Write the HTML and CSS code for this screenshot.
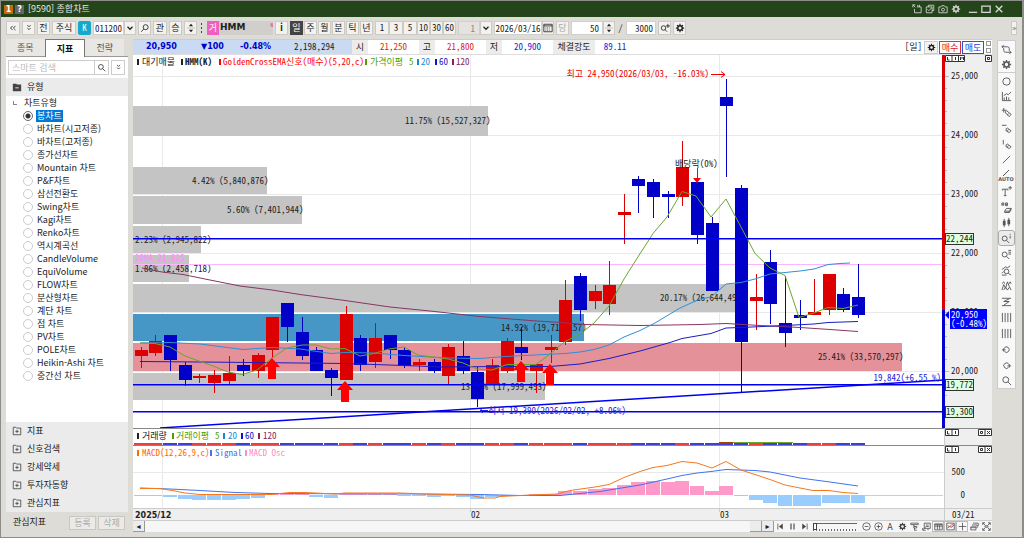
FILE: index.html
```html
<!DOCTYPE html>
<html lang="ko">
<head>
<meta charset="utf-8">
<title>[9590] 종합차트</title>
<link rel="stylesheet" href="styles.css">
</head>
<body>
<svg class="defs" aria-hidden="true">
  <symbol id="gear" viewBox="0 0 12 12"><circle cx="6" cy="6" r="2.7" fill="none" stroke="currentColor" stroke-width="1.8"/><path d="M6 1v2M6 9v2M1 6h2M9 6h2M2.5 2.5l1.3 1.3M8.2 8.2l1.3 1.3M9.5 2.5L8.2 3.8M3.8 8.2L2.5 9.5" stroke="currentColor" stroke-width="1.5"/></symbol>
  <symbol id="mag" viewBox="0 0 12 12"><g fill="none" stroke="currentColor"><circle cx="5.2" cy="5.2" r="3.2"/><path d="M7.6 7.6L11 11"/></g></symbol>
  <symbol id="magr" viewBox="0 0 12 12"><g fill="none" stroke="currentColor"><circle cx="6.8" cy="5" r="3"/><path d="M4.5 7.2L1.5 10.5"/></g></symbol>
  <symbol id="magplus" viewBox="0 0 12 12"><g fill="none" stroke="currentColor"><circle cx="4.2" cy="6" r="2.7"/><path d="M6 8l2.5 2.5M9.500 1v5M7 3.500h5"/></g></symbol>
  <symbol id="down" viewBox="0 0 12 12"><path d="M3 4.500l3 3 3-3" fill="none" stroke="currentColor" stroke-width="1.500"/></symbol>
  <symbol id="dbl" viewBox="0 0 12 12"><path d="M4 2.500l2 2 2-2M4 6l2 2 2-2" fill="none" stroke="currentColor"/></symbol>
  <symbol id="lefts" viewBox="0 0 12 12"><path d="M5.500 3.500L3 6l2.500 2.500M9 3.500L6.500 6 9 8.500" fill="none" stroke="currentColor"/></symbol>
  <symbol id="rights" viewBox="0 0 12 12"><path d="M2 3l3 3-3 3M6 3l3 3-3 3" fill="none" stroke="currentColor" stroke-width="1.500"/></symbol>
  <symbol id="spin" viewBox="0 0 12 12"><path d="M6 1l2.500 3h-5zM6 11l2.500-3h-5z" fill="currentColor"/><path d="M1 6h10" stroke="#bbb"/></symbol>
  <symbol id="cal" viewBox="0 0 12 12"><g fill="none" stroke="currentColor"><path d="M1 1.500h10v9H1zM1 3.500h10"/><path d="M3 6h6M3 8.500h6" stroke-dasharray="1 1"/></g></symbol>
  <symbol id="folderplus" viewBox="0 0 12 12"><g fill="none" stroke="currentColor"><path d="M1.500 1.500h3l1 1h5v8h-9zM6 4.500v4M4 6.500h4"/></g></symbol>
  <symbol id="folder" viewBox="0 0 12 12"><path d="M1 2h4l1 1h5v8H1z" fill="currentColor"/><path d="M4 7h4" stroke="#fff"/></symbol>
  <symbol id="w1" viewBox="0 0 12 12"><path d="M1 4V1h3M1 1l3 3M3 6v4.500h8v-7H6M7 3.500V1M9 3.500V1" fill="none" stroke="currentColor"/></symbol>
  <symbol id="w2" viewBox="0 0 12 12"><path d="M1.500 3.500h7v7h-7zM4 3.500v-2h6.500V8H8.500M3 6.500L4.500 8 8 4.500" fill="none" stroke="currentColor"/></symbol>
  <symbol id="cam" viewBox="0 0 12 12"><g fill="none" stroke="currentColor"><path d="M1 3.500h2.500l1-1.500h3l1 1.500H11v7H1z"/><circle cx="6" cy="6.800" r="1.800"/></g></symbol>
  <symbol id="min" viewBox="0 0 12 12"><path d="M1 10h10" stroke="currentColor" stroke-width="1.500"/></symbol>
  <symbol id="max" viewBox="0 0 12 12"><path d="M1 2.500h10v7.500H1z" fill="none" stroke="currentColor" stroke-width="1.500"/></symbol>
  <symbol id="close" viewBox="0 0 12 12"><path d="M2 2l8 8M10 2l-8 8" stroke="currentColor" stroke-width="1.600"/></symbol>
  <symbol id="cycle" viewBox="0 0 12 12"><path d="M1 3h6q2 0 2 2v2M3 1L1 3l2 2M11 9H5Q3 9 3 7V5M9 7l2 2-2 2" fill="none" stroke="currentColor"/></symbol>
  <symbol id="circ" viewBox="0 0 12 12"><circle cx="6" cy="6" r="4" fill="none" stroke="currentColor"/></symbol>
  <symbol id="chart" viewBox="0 0 12 12"><path d="M1.500 1v9.500H11M3.500 10V7M6 10V6M8.500 10V7M3 5l3-2 2 1 3-3" fill="none" stroke="currentColor"/></symbol>
  <symbol id="pen1" viewBox="0 0 12 12"><path d="M1 3.500h5M3 1v5M5 5l1-1 5 4-2 2.500-4-4zM8 7l-1 2" fill="none" stroke="currentColor"/></symbol>
  <symbol id="pen2" viewBox="0 0 12 12"><path d="M1 2.500h5M5.500 6.500l1.500-1 4 3-2 2-3.500-2zM8 7l-1 2" fill="none" stroke="currentColor"/></symbol>
  <symbol id="pen3" viewBox="0 0 12 12"><path d="M2.500 1v5M5.500 6.500l1.500-1 4 3-2 2-3.500-2zM8 7l-1 2" fill="none" stroke="currentColor"/></symbol>
  <symbol id="line" viewBox="0 0 12 12"><path d="M2 10l8-8" stroke="currentColor"/></symbol>
  <symbol id="tplus" viewBox="0 0 12 12"><path d="M1.500 5V3.500h6V5M4.500 3.500v7M3 10.500h3M10 0v4M8 2h4" fill="none" stroke="currentColor"/></symbol>
  <symbol id="abc" viewBox="0 0 12 12"><path d="M1 4V1h2v3M1 3h2M5 1h2v3H5zM5 2.500h2M4 10l2-3h5l-2 3zM4 10v1.500h5V10M9 11.500l2-3V7" fill="none" stroke="currentColor"/></symbol>
  <symbol id="cand" viewBox="0 0 12 12"><path d="M3.500 2v9M8.500 1v9" stroke="currentColor"/><path d="M2 4h3v5H2zM7 3h3v5H7z" fill="currentColor"/></symbol>
  <symbol id="mag1" viewBox="0 0 12 12"><g fill="none" stroke="currentColor"><circle cx="4" cy="6" r="2.700"/><path d="M6 8l3 3M10 1v1M10 3v3"/></g></symbol>
  <symbol id="mag2" viewBox="0 0 12 12"><g fill="none" stroke="currentColor"><circle cx="4" cy="6" r="2.700"/><path d="M6 8l3 3M8 1.500h3M8 3.500h3M8 5.500h3"/></g></symbol>
  <symbol id="magc" viewBox="0 0 12 12"><g fill="none" stroke="currentColor"><circle cx="6" cy="7" r="2.500"/><path d="M8 9l3 2M1 5l4-3 2 1 3-2M1 9l2-2M1 11h5"/></g></symbol>
  <symbol id="peaks" viewBox="0 0 12 12"><path d="M1 11l2-6 2 4 2-7 2 5 2 4M1 4l2-2 1 2M9 4l1-2 1 2M3 11l2-3 2 3 2-3" fill="none" stroke="currentColor"/></symbol>
  <symbol id="zig" viewBox="0 0 12 12"><path d="M1 2.500h10M1 10.500h10M9 3L3 6h6l-6 4" fill="none" stroke="currentColor"/></symbol>
  <symbol id="bars" viewBox="0 0 12 12"><path d="M1.500 1v10M4.500 1v10M7.500 1v10M10.500 1v10" stroke="currentColor"/></symbol>
  <symbol id="undo" viewBox="0 0 12 12"><path d="M4 9.500a3 3 0 1 0-.5-4M1 7.500h4M3 5.500v4" fill="none" stroke="currentColor"/></symbol>
  <symbol id="redo" viewBox="0 0 12 12"><path d="M8 9.500a3 3 0 1 1 .5-4M7 7.500h4M9 5.500v4" fill="none" stroke="currentColor"/></symbol>
  <symbol id="first" viewBox="0 0 12 12"><path d="M2.500 2v8" stroke="currentColor"/><path d="M9 2v8L4 6z" fill="currentColor"/></symbol>
  <symbol id="pause" viewBox="0 0 12 12"><path d="M4 2v8M8 2v8" stroke="currentColor" stroke-width="1.500"/></symbol>
  <symbol id="last" viewBox="0 0 12 12"><path d="M9.500 2v8" stroke="currentColor"/><path d="M3 2v8l5-4z" fill="currentColor"/></symbol>
  <symbol id="zout" viewBox="0 0 12 12"><g fill="none" stroke="currentColor"><circle cx="6" cy="6" r="5"/><path d="M3.500 6h5"/></g></symbol>
  <symbol id="zin" viewBox="0 0 12 12"><g fill="none" stroke="currentColor"><circle cx="6" cy="6" r="5"/><path d="M3.500 6h5M6 3.500v5"/></g></symbol>
  <symbol id="net" viewBox="0 0 12 12"><path d="M1 1.500h10v2H1zM4 4l3 2M5 6h4v2H5zM6 8v3h3" fill="none" stroke="currentColor"/></symbol>
  <symbol id="shot" viewBox="0 0 12 12"><path d="M3 1.500h8v7H3zM1 10.500l4-4M1 8v3h4M5 4h4M5 6h4M8 9v2" fill="none" stroke="currentColor"/></symbol>
  <symbol id="table" viewBox="0 0 12 12"><path d="M1 2.500h10v8H1zM1 3.500h10M1 5.500h10M4.500 4v6M7.500 4v6" fill="none" stroke="currentColor"/></symbol>
  <symbol id="mini" viewBox="0 0 12 12"><path d="M1 1.500h10v9H1zM2 8l3-2 2 1 4-3" fill="none" stroke="currentColor"/><path d="M2 5l3 1 2-2 3-1" fill="none" stroke="#d33"/></symbol>
  <symbol id="cross" viewBox="0 0 12 12"><path d="M1 6h10M6 1v10" stroke="currentColor"/></symbol>
  <symbol id="stack" viewBox="0 0 12 12"><path d="M4 1.500h7v4M2.500 4h7v4M1 6.500h7v4H1z" fill="none" stroke="currentColor"/><path d="M1 7.500h7" stroke="#d33"/></symbol>
  <symbol id="full" viewBox="0 0 12 12"><path d="M1 4V1h3M8 1h3v3M11 8v3H8M4 11H1V8M1 1l3 3M11 1L8 4M11 11L8 8M1 11l3-3M4 5h4v2H4z" fill="none" stroke="currentColor"/></symbol>
</svg>
<div class="window">
  <header class="titlebar">
    <span class="badge orange">1</span><span class="badge">?</span>
    <h1>[9590] 종합차트</h1>
    <div class="wincontrols">
      <button aria-label="분리"><svg><use href="#w1"/></svg></button><button aria-label="복사"><svg><use href="#w2"/></svg></button><button aria-label="캡처"><svg><use href="#cam"/></svg></button><button aria-label="설정"><svg><use href="#gear"/></svg></button>
      <button class="first" aria-label="최소화"><svg><use href="#min"/></svg></button><button aria-label="최대화"><svg><use href="#max"/></svg></button><button aria-label="닫기"><svg><use href="#close"/></svg></button>
    </div>
  </header>

  <div class="toolbar">
    <button class="b w14" aria-label="이전"><svg><use href="#lefts"/></svg></button>
    <button class="b" aria-label="펼치기"><svg><use href="#dbl"/></svg></button>
    <button class="b">전</button>
    <button class="b w24">주식</button>
    <button class="b cyan">K</button>
    <div class="joined"><input class="code" value="011200" aria-label="종목코드"><button class="b w12" aria-label="종목 목록"><svg><use href="#down"/></svg></button></div>
    <button class="b" aria-label="종목 검색"><svg><use href="#magr"/></svg></button>
    <button class="b w14">관</button>
    <button class="b">승</button>
    <button class="b" aria-label="종목 이동"><svg><use href="#spin"/></svg></button>
    <span class="dots"><i></i><i></i><i></i></span>
    <div class="joined stock"><span class="pink">거</span><span class="name">HMM<sup>N</sup></span></div>
    <button class="b bold">i</button>
    <div class="joined gapped"><button class="b dark">일</button><button class="b">주</button><button class="b">월</button><button class="b">분</button><button class="b">틱</button><button class="b">년</button></div>
    <div class="joined mins"><button class="b w14">1</button><button class="b w14">3</button><button class="b w14">5</button><button class="b">10</button><button class="b">30</button><button class="b">60</button></div>
    <div class="joined"><input class="unit" value="1" disabled aria-label="분 단위"><button class="b w12" aria-label="분 선택"><svg><use href="#down"/></svg></button></div>
    <div class="joined"><input class="date" value="2026/03/16" aria-label="조회일"><button class="b w12" aria-label="달력"><svg><use href="#cal"/></svg></button></div>
    <button class="b" disabled>당</button>
    <div class="joined"><input class="count" value="50" aria-label="표시 개수"><button class="b w12" aria-label="개수 조절"><svg><use href="#spin"/></svg></button></div>
    <span class="slash">/</span>
    <input class="total" value="3000" aria-label="전체 개수">
    <button class="b" aria-label="확대"><svg><use href="#magplus"/></svg></button>
    <button class="b" aria-label="차트 설정"><svg><use href="#gear"/></svg></button>
    <button class="b more" aria-label="더보기"><svg><use href="#rights"/></svg></button>
  </div>

  <div class="content">
    <aside class="sidebar">
      <nav class="tabs"><button>종목</button><button class="on">지표</button><button>전략</button></nav>
      <div class="search"><input placeholder="스마트 검색" aria-label="스마트 검색"><button class="find" aria-label="검색"><svg><use href="#mag"/></svg></button><button class="expand" aria-label="펼치기"><svg><use href="#dbl"/></svg></button></div>
      <h2 class="section"><svg><use href="#folder"/></svg>유형</h2>
      <div class="tree">
        <p><i></i>차트유형</p>
        <label><input type="radio" name="t" checked><span>봉차트</span></label>
        <label><input type="radio" name="t"><span>바차트(시고저종)</span></label>
        <label><input type="radio" name="t"><span>바차트(고저종)</span></label>
        <label><input type="radio" name="t"><span>종가선차트</span></label>
        <label><input type="radio" name="t"><span>Mountain 차트</span></label>
        <label><input type="radio" name="t"><span>P&amp;F차트</span></label>
        <label><input type="radio" name="t"><span>삼선전환도</span></label>
        <label><input type="radio" name="t"><span>Swing차트</span></label>
        <label><input type="radio" name="t"><span>Kagi차트</span></label>
        <label><input type="radio" name="t"><span>Renko차트</span></label>
        <label><input type="radio" name="t"><span>역시계곡선</span></label>
        <label><input type="radio" name="t"><span>CandleVolume</span></label>
        <label><input type="radio" name="t"><span>EquiVolume</span></label>
        <label><input type="radio" name="t"><span>FLOW차트</span></label>
        <label><input type="radio" name="t"><span>분산형차트</span></label>
        <label><input type="radio" name="t"><span>계단 차트</span></label>
        <label><input type="radio" name="t"><span>점 차트</span></label>
        <label><input type="radio" name="t"><span>PV차트</span></label>
        <label><input type="radio" name="t"><span>POLE차트</span></label>
        <label><input type="radio" name="t"><span>Heikin-Ashi 차트</span></label>
        <label><input type="radio" name="t"><span>중간선 차트</span></label>
      </div>
      <div class="folders">
        <h2 class="section"><svg><use href="#folderplus"/></svg>지표</h2>
        <h2 class="section"><svg><use href="#folderplus"/></svg>신호검색</h2>
        <h2 class="section"><svg><use href="#folderplus"/></svg>강세약세</h2>
        <h2 class="section"><svg><use href="#folderplus"/></svg>투자자동향</h2>
        <h2 class="section"><svg><use href="#folderplus"/></svg>관심지표</h2>
      </div>
      <footer><span>관심지표</span><button disabled>등록</button><button disabled>삭제</button></footer>
    </aside>

    <main>
      <div class="quote">
        <div class="price"><b class="c1">20,950</b><b class="c2">▼100</b><b class="c3">-0.48%</b><span>2,198,294</span></div>
        <span class="lab">시</span><span class="val red">21,250</span>
        <span class="lab">고</span><span class="val red">21,800</span>
        <span class="lab">저</span><span class="val blue">20,900</span>
        <span class="lab power">체결강도</span><span class="val last blue">89.11</span>
        <span class="period">[일]</span>
        <button class="cog" aria-label="설정"><svg><use href="#gear"/></svg></button>
        <button class="buy">매수</button><button class="sell">매도</button>
        <span class="pair"><i></i><i></i></span>
      </div>
      <svg class="chart" viewBox="133 55 859 466" role="img" aria-label="HMM 일봉 차트">
        <rect x="133" y="55" width="859" height="466" fill="#fff"/>
        <rect x="944" y="55" width="48" height="466" fill="#efefef"/>
        <rect x="133" y="509" width="859" height="12" fill="#efefef"/>
        <path class="grid" d="M133 76.500H944M133 135.500H944M133 194.500H944M133 253.500H944M133 312.500H944M133 371.500H944M133 472.500H944M162.500 55V509M470.500 55V509M719.500 55V509"/>
        <g id="profile"></g>
        <g class="t" id="profiletext"></g>
        <rect x="133" y="264" width="811" height="1" fill="#ffb4ff"/>
        <g id="candles" shape-rendering="crispEdges"></g>
        <g class="ma">
          <polyline stroke="#8a3562" points="142,268 162,272 183,274.500 210,280 240,286 272,290 300,294.500 345,300.500 390,307 430,311 480,316.500 530,320.500 560,322.500 584,324.500 640,325.500 700,324.500 726,323.500 760,325.500 800,327.500 830,329.500 858,331.500"/>
          <polyline stroke="#1d1dc4" points="140,361.500 200,362 300,363 345,363.500 418,366 440,367 500,366.500 550,366.500 580,364 609,358.500 640,351 670,342.500 682,338.500 711,333.500 726,328 741,327.500 785,325.500 814,324 828,322.500 858,321.500"/>
          <polyline stroke="#2f8fd6" points="140,343 170,342.500 200,344 243,349.500 272,347.500 300,349 331,353.500 345,352.500 374,353 404,355.500 430,357 450,358 480,358.500 505,356.500 535,355 565,353.500 580,352 594,349.500 609,345 624,337 640,330.500 655,323 680,308 700,299 711,297 726,284 741,282.500 755,279 770,274 785,272.500 800,271 814,269 828,264.500 840,263.500 850,263"/>
          <polyline stroke="#6aa62a" points="140,343 155,343.500 170,347 185,356 199,361 213,366 228,372 242,374.500 257,370 272,358 287,348 302,345 316,345 331,349 345,348.500 360,356 374,353.500 389,349 404,347 418,355 433,357 448,359 463,363 477,369 492,370 507,364.500 536,364.500 550,354 565,341.500 580,334 594,323 609,306 624,279 636,260 653,233.500 667,217 682,191.500 696,196 711,217 726,199 741,227 755,253.500 770,268 785,275.500 799,317.500 814,313 828,307.500 843,308.500 858,305"/>
        </g>
        <g fill="#0000f0"><rect x="133" y="238" width="810" height="1.500"/><rect x="133" y="384" width="810" height="1.500"/><rect x="133" y="411" width="810" height="1.500"/></g>
        <path d="M160 428L944 380" stroke="#0000f0" stroke-width="1.500"/>
        <path fill="#f00" d="M272 358l8 9h-4v12h-8v-12h-4zM345 381l8 9h-4v12h-8v-12h-4zM521 361l8 9h-4v12h-8v-12h-4zM550 364l8 9h-4v12h-8v-12h-4zM697 183l4-5h-3v-10h-1v10h-4z"/>
        <g class="t">
          <text x="675" y="167">배당락(0%)</text>
          <text x="709" y="77" text-anchor="end" fill="#e00">최고 24,950(2026/03/03, -16.03%)</text>
          <text x="626" y="414" text-anchor="end" fill="#22d">최저 19,390(2026/02/02, +8.06%)</text>
          <text x="941" y="381" text-anchor="end" fill="#22d">19,842(+6.55 %)</text>
        </g>
        <path d="M711 74.500h14M721 71.500l4 3-4 3" stroke="#e00" fill="none"/>
        <path d="M480 410.500h8M483 408l-3 2.500 3 2.500" stroke="#22d" fill="none"/>
        <rect x="942" y="55" width="3" height="255" fill="#d80000"/><rect x="942" y="310" width="3" height="118" fill="#0000d0"/>
        <g class="t" id="axis" text-anchor="end"><text x="978" y="79">25,000</text><text x="978" y="138">24,000</text><text x="978" y="197">23,000</text><text x="978" y="256">22,000</text><text x="978" y="315">21,000</text><text x="978" y="374">20,000</text><text x="965" y="475">500</text><text x="965" y="498">0</text></g>
        <g fill="#dfffdf" stroke="#333"><rect x="945.500" y="233.500" width="28" height="11"/><rect x="945.500" y="379.500" width="28" height="11"/><rect x="945.500" y="406.500" width="28" height="11"/></g>
        <g class="t"><text x="946" y="242">22,244</text><text x="946" y="388">19,772</text><text x="946" y="415">19,300</text></g>
        <rect x="950" y="309" width="37" height="20" fill="#00f"/><path d="M945 315l4-4v8z" fill="#00f"/>
        <g class="t w"><text x="951" y="318">20,950</text><text x="951" y="327">(-0.48%)</text></g>
        <g class="t">
          <rect x="137" y="59" width="2" height="6"/><text x="142" y="65">대기매물</text>
          <rect x="181" y="59" width="2" height="6"/><text x="185" y="65" class="bold">HMM(K)</text>
          <g fill="#f00"><rect x="219" y="59" width="2" height="6"/><text x="223" y="65">GoldenCrossEMA신호(매수)(5,20,c)</text></g>
          <g fill="#4f9f00"><rect x="365" y="59" width="2" height="6"/><text x="370" y="65">가격이평</text><text x="409" y="65">5</text></g>
          <g fill="#1c86d6"><rect x="417" y="59" width="2" height="6"/><text x="421" y="65">20</text></g>
          <g fill="#1111cc"><rect x="435" y="59" width="2" height="6"/><text x="439" y="65">60</text></g>
          <g fill="#862458"><rect x="452" y="59" width="2" height="6"/><text x="456" y="65">120</text></g>
        </g>
        <rect x="133" y="428" width="859" height="1" fill="#888"/><rect x="133" y="445" width="859" height="1" fill="#888"/>
        <g id="volume" shape-rendering="crispEdges"></g>
        <rect x="719" y="442" width="14" height="2" fill="#a04000"/><rect x="733" y="442" width="60" height="1" fill="#6aa62a"/>
        <g class="t">
          <rect x="137" y="433" width="2" height="6"/><text x="142" y="439">거래량</text>
          <g fill="#4f9f00"><rect x="172" y="433" width="2" height="6"/><text x="176" y="439">거래이평</text><text x="215" y="439">5</text></g>
          <g fill="#1c86d6"><rect x="223" y="433" width="2" height="6"/><text x="228" y="439">20</text></g>
          <g fill="#1111cc"><rect x="241" y="433" width="2" height="6"/><text x="245" y="439">60</text></g>
          <g fill="#862458"><rect x="258" y="433" width="2" height="6"/><text x="263" y="439">120</text></g>
          <g fill="#ff6a00"><rect x="137" y="450" width="2" height="6"/><text x="142" y="456">MACD(12,26,9,c)</text></g>
          <g fill="#3f74ee"><rect x="210" y="450" width="2" height="6"/><text x="215" y="456">Signal</text></g>
          <g fill="#ff8cc6"><rect x="245" y="450" width="2" height="6"/><text x="249" y="456">MACD Osc</text></g>
        </g>
        <g id="osc" shape-rendering="crispEdges"></g>
        <rect x="865" y="495" width="78" height="1" fill="#ffb4d6"/>
        <g class="ma">
          <polyline stroke="#3f74ee" points="140,488 170,489 200,490.500 235,492.500 270,493.500 420,494 480,494.500 520,495.500 560,495.500 580,493.500 600,491.500 640,485 667,479 682,475.500 697,473 711,471.500 726,469.500 755,470.500 770,472 800,478 830,482 858,486"/>
          <polyline stroke="#f4791f" points="140,488.500 160,488.500 175,491 185,493 200,494.500 270,494.500 290,492.500 305,492.500 335,494 345,493 400,493 425,494 470,495 483,498 495,498 500,496.500 530,495 557,494 570,490.500 595,487 609,484.500 624,477.500 640,471.500 653,467.500 667,465.500 682,461.500 697,463 712,468 726,461.500 741,470 755,474.500 770,479.500 785,485 800,488 813,490.500 829,490.500 843,492.500 858,493.500"/>
        </g>
        <path d="M133 508.500H992M133 520.500H992M944.500 428V521M719.500 509v3M470.500 509v3" stroke="#ccc"/>
        <g class="t"><text x="135" y="518" class="dj">2025/12</text><text x="471" y="518">02</text><text x="720" y="518">03</text><text x="952" y="518">03/21</text></g>
        <g fill="#fff" stroke="#333">
          <path d="M945.500 55.500h19v6h-19zM952 55.500v6M958.500 55.500v6M947.500 57v3h2M955.500 57v3M960.500 60v-3l1.500 1.500 1.500-1.500v3M985.500 55.500h6v6h-6zM987.500 57.500h2v2h-2z"/>
          <path d="M945.500 429.500h13v6h-13zM952 429.500v6M947.500 431v3h2M955.500 431v3M978.500 429.500h13v6h-13zM985 429.500v6M980.500 431.500h2v2h-2zM987 431l3 3M990 431l-3 3"/>
          <path d="M945.500 446.500h13v6h-13zM952 446.500v6M947.500 448v3h2M955.500 448v3M978.500 446.500h13v6h-13zM985 446.500v6M980.500 448.500h2v2h-2zM987 448l3 3M990 448l-3 3"/>
        </g>
      </svg>
      <div class="scroll">
        <button class="sb" aria-label="왼쪽">◂</button><div class="track"></div><button class="sb" aria-label="이동 막대"></button><button class="sb" aria-label="오른쪽">▸</button>
        <div class="icons"><button aria-label="처음"><svg><use href="#first"/></svg></button><button aria-label="멈춤"><svg><use href="#pause"/></svg></button><button aria-label="끝"><svg><use href="#last"/></svg></button></div>
        <input type="range" value="0" aria-label="재생 속도">
        <div class="icons"><button aria-label="축소"><svg><use href="#zout"/></svg></button><button aria-label="확대"><svg><use href="#zin"/></svg></button><button>A</button><button aria-label="설정"><svg><use href="#gear"/></svg></button><button aria-label="연동"><svg><use href="#net"/></svg></button><button aria-label="캡처"><svg><use href="#shot"/></svg></button><button class="box" aria-label="표"><svg><use href="#table"/></svg></button><button class="box" aria-label="차트"><svg><use href="#mini"/></svg></button><button class="box" aria-label="십자선"><svg><use href="#cross"/></svg></button><button aria-label="겹치기"><svg><use href="#stack"/></svg></button><button aria-label="전체화면"><svg><use href="#full"/></svg></button></div>
      </div>
    </main>

    <nav class="tools" id="tools"></nav>
  </div>
</div>
<script src="chart.js"></script>
</body>
</html>
```
FILE: styles.css
```css
:root {
  --num: "Noto Sans Mono CJK KR", "Noto Sans CJK KR", sans-serif;
  --ui: "Noto Sans CJK KR", sans-serif;
}
* { box-sizing: border-box; }
body { margin: 0; background: #dddcd6; font: 9px/12px var(--ui); color: #222; }
button, input { font: inherit; color: inherit; margin: 0; padding: 0; border-radius: 0; }
h1, h2, p { margin: 0; font-size: inherit; font-weight: 400; }
.defs { position: absolute; width: 0; height: 0; }

.window { display: flex; flex-direction: column; min-height: 100vh; border: 1px solid #8c8c88; border-width: 1px 2px 1px 1px; }

.titlebar { display: flex; align-items: center; gap: 2px; height: 16px; padding: 0 17px 0 3px; background: #24451a; color: #fff; }
.badge { width: 9px; height: 9px; background: #666; font: bold 8px/9px "DejaVu Sans", sans-serif; text-align: center; }
.badge.orange { background: #c26a0c; }
.titlebar h1 { margin-left: 2px; color: #e8e8e8; }
.wincontrols { display: flex; margin-left: auto; color: #d8d8d8; }
.wincontrols button { width: 13px; height: 12px; border: 0; background: none; display: grid; place-items: center; }
.wincontrols button.first { margin-left: 4px; }
.wincontrols svg { width: 10px; height: 10px; }

.toolbar { display: flex; align-items: center; gap: 2px; height: 22px; padding: 0 5px; font: 9px/13px var(--num); }
.b { display: grid; place-items: center; flex: none; width: 13px; height: 14px; border: 1px solid #cbcac5; background: #f3f2ef; white-space: nowrap; line-height: 12px; color: #222; }
.b svg { width: 10px; height: 10px; }
.b:disabled { color: #aaa; }
.w12 { width: 12px; }
.w14 { width: 14px; }
.w24 { width: 24px; }
.cyan { background: #16a9cc; border-color: #16a9cc; border-radius: 2px; color: #fff; }
.dark { background: #444; border-color: #444; color: #fff; }
.bold { font-weight: 700; }
.joined { display: flex; }
.gapped { gap: 1px; }
.toolbar input { height: 14px; border: 1px solid #d0cfca; background: #fff; text-align: right; }
.toolbar .code { width: 31px; text-align: center; }
.toolbar .unit { width: 22px; background: #e4e3df; color: #888; padding-right: 4px; }
.toolbar .date { width: 48px; text-align: center; }
.toolbar .count { width: 32px; padding-right: 3px; }
.toolbar .total { width: 30px; padding-right: 2px; }
.slash { width: 7px; text-align: center; }
.dots { display: grid; justify-items: center; gap: 2px; width: 4px; }
.dots i { width: 1px; height: 2px; background: #444; }
.stock { margin-left: 2px; line-height: 14px; }
.pink { width: 12px; background: #ee5fbe; color: #fff; text-align: center; }
.name { display: flex; justify-content: space-between; width: 54px; height: 14px; padding-left: 1px; background: #d0cfcb; font: bold 9px/13px "DejaVu Sans", sans-serif; }
.name sup { font: 5px/7px var(--num); color: #e02060; }
.more { width: 6px; margin-left: auto; }
.more svg { width: 5px; height: 5px; }

.content { display: flex; flex: 1; align-items: flex-start; padding: 0 6px 5px 5px; }

.sidebar { display: flex; flex-direction: column; align-self: stretch; flex: none; width: 122px; background: #fff; }
.tabs { display: flex; height: 18px; padding-right: 4px; background: #dddcd6; border-bottom: 1px solid #999; }
.tabs button { flex: 1; height: 17px; border: 0; background: #e8e7e3; color: #555; }
.tabs .on { height: 18px; background: #fff; color: #111; font-weight: 700; border: 1px solid #777; border-bottom: 0; }
.search { display: flex; height: 21px; padding: 3px 3px 3px 2px; }
.search input { flex: 1; min-width: 0; border: 1px solid #ccc; padding-left: 3px; }
.search input::placeholder { color: #bbb; }
.search button { display: grid; place-items: center; width: 14px; border: 1px solid #ccc; background: #fff; }
.search .find { border-left: 0; }
.search .expand { margin-left: 2px; }
.search svg { width: 9px; height: 9px; }
.section { display: flex; align-items: center; gap: 5px; height: 18px; padding-left: 6px; background: #ebebeb; }
.section svg { width: 10px; height: 10px; color: #444; }
.tree p { display: flex; align-items: center; gap: 7px; height: 13px; padding-left: 7px; }
.tree i { width: 4px; height: 4px; border: 1px solid #888; border-width: 0 0 1px 1px; }
.tree label { display: flex; align-items: center; gap: 3px; height: 13px; padding-left: 17px; white-space: nowrap; }
.tree span { padding: 0 1px; line-height: 12px; }
.tree input { appearance: none; width: 10px; height: 10px; border: 1px solid #ccc; border-radius: 50%; background: #fff; }
.tree input:checked { border-color: #666; background: radial-gradient(#333 0 2px, #fff 3px); }
.tree input:checked + span { background: #0078d7; color: #fff; }
.folders { margin-top: auto; }
.sidebar footer { display: flex; gap: 2px; height: 20px; padding: 4px 3px 2px 7px; background: #dddcd6; }
.sidebar footer span { flex: 1; }
.sidebar footer button { width: 27px; border: 1px solid #c8c7c2; background: #ebeae6; color: #aaa; }

main { flex: 1; min-width: 0; margin: 0 5px; display: flex; flex-direction: column; background: #fff; border-top: 1px solid #ccc; }
.quote { display: flex; align-items: center; height: 15px; font: 9px/14px var(--num); border-bottom: 1px solid #ddd; }
.price { display: flex; width: 219px; height: 14px; padding-left: 13px; background: #c9daf2; }
.price b { font: bold 8px/14px "DejaVu Sans", sans-serif; color: #0000cc; }
.c1 { width: 55px; }
.c2 { width: 39px; }
.c3 { width: 54px; }
.lab { width: 16px; background: #ececec; text-align: center; }
.power { width: 42px; }
.val { width: 51px; text-align: center; }
.last { width: 40px; }
.red { color: #e02020; }
.blue { color: #2020d0; }
.period { margin-left: auto; margin-right: 2px; }
.quote button { height: 13px; padding: 0; background: #fff; line-height: 11px; }
.quote .cog { display: grid; place-items: center; width: 14px; margin-right: 1px; border: 1px solid #ccc; background: #f3f3f1; }
.cog svg { width: 9px; height: 9px; }
.quote .buy { width: 22px; border: 1px solid #e03030; color: #e02020; }
.quote .sell { width: 22px; margin-left: 1px; border: 1px solid #3050e0; color: #2040e0; }
.pair { display: grid; gap: 2px; width: 8px; padding-left: 2px; }
.pair i { width: 5px; height: 5px; border: 1px solid #999; }

.chart { display: block; width: 100%; }
.grid { stroke: #e9e9e9; }
.t { font: 9px var(--num); fill: #222; }
.t.w { fill: #fff; }
.dj { font: bold 8px "DejaVu Sans", sans-serif; }
.ma polyline { fill: none; stroke-width: 1; }

.scroll { display: flex; align-items: center; height: 11px; background: #f6f6f6; }
.sb { width: 12px; height: 11px; padding: 0; border: 1px solid #999; border-width: 0 1px 1px 0; background: #ececea; font: 8px/9px "DejaVu Sans", sans-serif; }
.track { flex: 1; }
.icons { display: flex; }
.icons button { display: grid; place-items: center; width: 12px; height: 11px; border: 0; background: none; font: 9px/10px var(--ui); color: #444; }
.icons svg { width: 9px; height: 9px; }
.icons .box { border: 1px solid #bbb; }
.scroll input { appearance: none; width: 44px; height: 9px; margin: 0 3px; background: linear-gradient(#666, #666) 0 1px / 100% 1px no-repeat, repeating-linear-gradient(90deg, #666 0 1px, transparent 1px 3px) 0 7px / 100% 2px no-repeat; }
.scroll input::-webkit-slider-thumb { appearance: none; width: 4px; height: 7px; border: 1px solid #444; background: #fff; }

.tools { display: flex; flex-direction: column; flex: none; width: 19px; margin-top: 1px; background: #f9f9f9; border: 1px solid #ccc; }
.tools button { display: grid; place-items: center; height: 16px; border: 0; background: none; color: #555; }
.tools button:nth-child(4n) { height: 15px; }
.tools button:nth-child(2) { border-bottom: 1px solid #ccc; }
.tools .on { border: 1px solid #aaa; border-radius: 3px; background: #ececec; }
.tools svg { width: 11px; height: 11px; }
.tools text { font: bold 5px "DejaVu Sans", sans-serif; fill: #555; }
.tools .auto svg { width: 17px; height: 12px; }
```
FILE: chart.js
```js
const put = (id, html) => { document.getElementById(id).innerHTML = html; };
const STEP = 14.64;
const cx = i => 140.7 + i * STEP;

// Volume profile: [y, height, right edge, fill, label, label start]
const profile = [
  [106, 30, 488, '#c4c4c4', '11.75% (15,527,327)', 405],
  [167, 27, 267, '#c4c4c4', '4.42% (5,840,876)', 192],
  [196, 28, 302, '#c4c4c4', '5.60% (7,401,944)', 227],
  [226, 27, 201, '#c4c4c4', '2.23% (2,945,822)', 135],
  [255, 27, 189, '#c4c4c4', '1.86% (2,458,718)', 135],
  [284, 28, 742, '#c4c4c4', '20.17% (26,644,490)', 660],
  [314, 27, 584, '#4797c6', '14.92% (19,711,157)', 501],
  [343, 28, 902, '#e4919a', '25.41% (33,570,297)', 818],
  [373, 27, 545, '#c4c4c4', '13.62% (17,999,493)', 461]
];
put('profile', profile.map(([y, h, r, f]) => `<rect x="133" y="${y}" width="${r - 133}" height="${h}" fill="${f}"/>`).join(''));
put('profiletext', profile.map(([y, h, r, f, t, x]) => `<text x="${x}" y="${y + Math.round(h / 2) + 3}">${t}</text>`).join('')
  + '<text x="135" y="261" fill="#ff8cff">20MA 21.815</text>');

// Candles: [up, body top, body bottom, high, low]
const candles = [
  [1,350,356,347,368],[1,341,353,335,356],[0,335,360,335,371],[0,365,380,362,386],[1,376,378,374,383],
  [1,375,383,370,393],[1,373,381,356,384],[0,365,371,359,376],[1,355,371,353,378],[1,317,350,317,358],
  [0,303,327,303,342],[0,332,356,317,360],[0,350,371,347,371],[0,370,378,368,396],[1,314,380,306,380],
  [0,338,365,335,371],[1,338,362,323,368],[0,335,350,335,359],[0,350,366,347,368],[1,362,365,359,371],
  [0,362,371,359,373],[1,347,376,344,385],[0,356,371,341,374],[0,372,399,367,407],[1,365,385,359,385],
  [1,341,371,338,373],[0,347,353,327,360],[1,364,371,364,393],[1,347,350,335,363],[1,300,342,280,345],
  [0,276,310,273,321],[1,291,301,285,309],[1,285,304,261,315],[1,212,215,194,244],[0,179,186,176,213],
  [0,182,197,179,218],[0,194,197,191,218],[1,167,197,141,206],[0,182,235,182,244],[0,223,291,217,291],
  [0,97,106,79,177],[0,188,342,185,392],[1,297,301,274,330],[0,262,304,250,324],[0,323,333,276,347],
  [0,315,318,300,330],[1,312,315,279,315],[1,274,310,274,315],[0,294,310,288,312],[0,297,315,264,318]
];
put('candles', candles.map(([up, t, b, h, l], i) => {
  const x = Math.round(cx(i)), c = up ? '#dc0000' : '#0000c8';
  return `<rect x="${x}" y="${h}" width="1" height="${l - h}" fill="${c}"/><rect x="${x - 6}" y="${t}" width="13" height="${b - t}" fill="${c}"/>`;
}).join(''));
put('volume', candles.map(([up], i) => `<rect x="${Math.round(cx(i)) - 7}" y="443" width="14" height="2" fill="${up ? '#e84040' : '#4040d0'}"/>`).join(''));

// Oscillator bar ends, measured from the zero line at 495
const osc = [1,1,2,4,5,5,5,4,3,-1,-1,-1,2,3,-1,-1,-1,-1,1,1,2,1,2,4,2,1,1,-1,-1,-4,-4,-6,-7,-10,-13,-14,-13,-14,-9,-4,-9,1,5,8,11,11,11,8,8,8];
put('osc', osc.map((v, i) => `<rect x="${Math.round(cx(i)) - 7}" y="${v < 0 ? 495 + v : 495}" width="14" height="${Math.abs(v)}" fill="${v < 0 ? '#ff99c9' : '#99ccff'}"/>`).join(''));

let ticks = '';
for (let k = 0; k < 29; k++) ticks += `<rect x="945" y="${Math.round(76 + k * 11.8)}" width="${k % 5 ? 2 : 4}" height="1" fill="#bbb"/>`;
document.getElementById('axis').insertAdjacentHTML('beforeend', ticks);

const tools = ['cycle','gear','circ','chart','pen1','pen2','pen3','line','auto','tplus','abc','cand','mag1','mag2','magc','peaks','zig','bars','bars','undo','redo','mag'];
put('tools', tools.map((n, i) => n === 'auto'
  ? '<button class="auto"><svg viewBox="0 0 17 12"><path d="M5 7l6-6" stroke="#555"/><text x="8" y="12" text-anchor="middle">AUTO</text></svg></button>'
  : `<button aria-label="도구 ${i + 1}"${i === 12 ? ' class="on"' : ''}><svg><use href="#${n}"/></svg></button>`).join(''));
```
